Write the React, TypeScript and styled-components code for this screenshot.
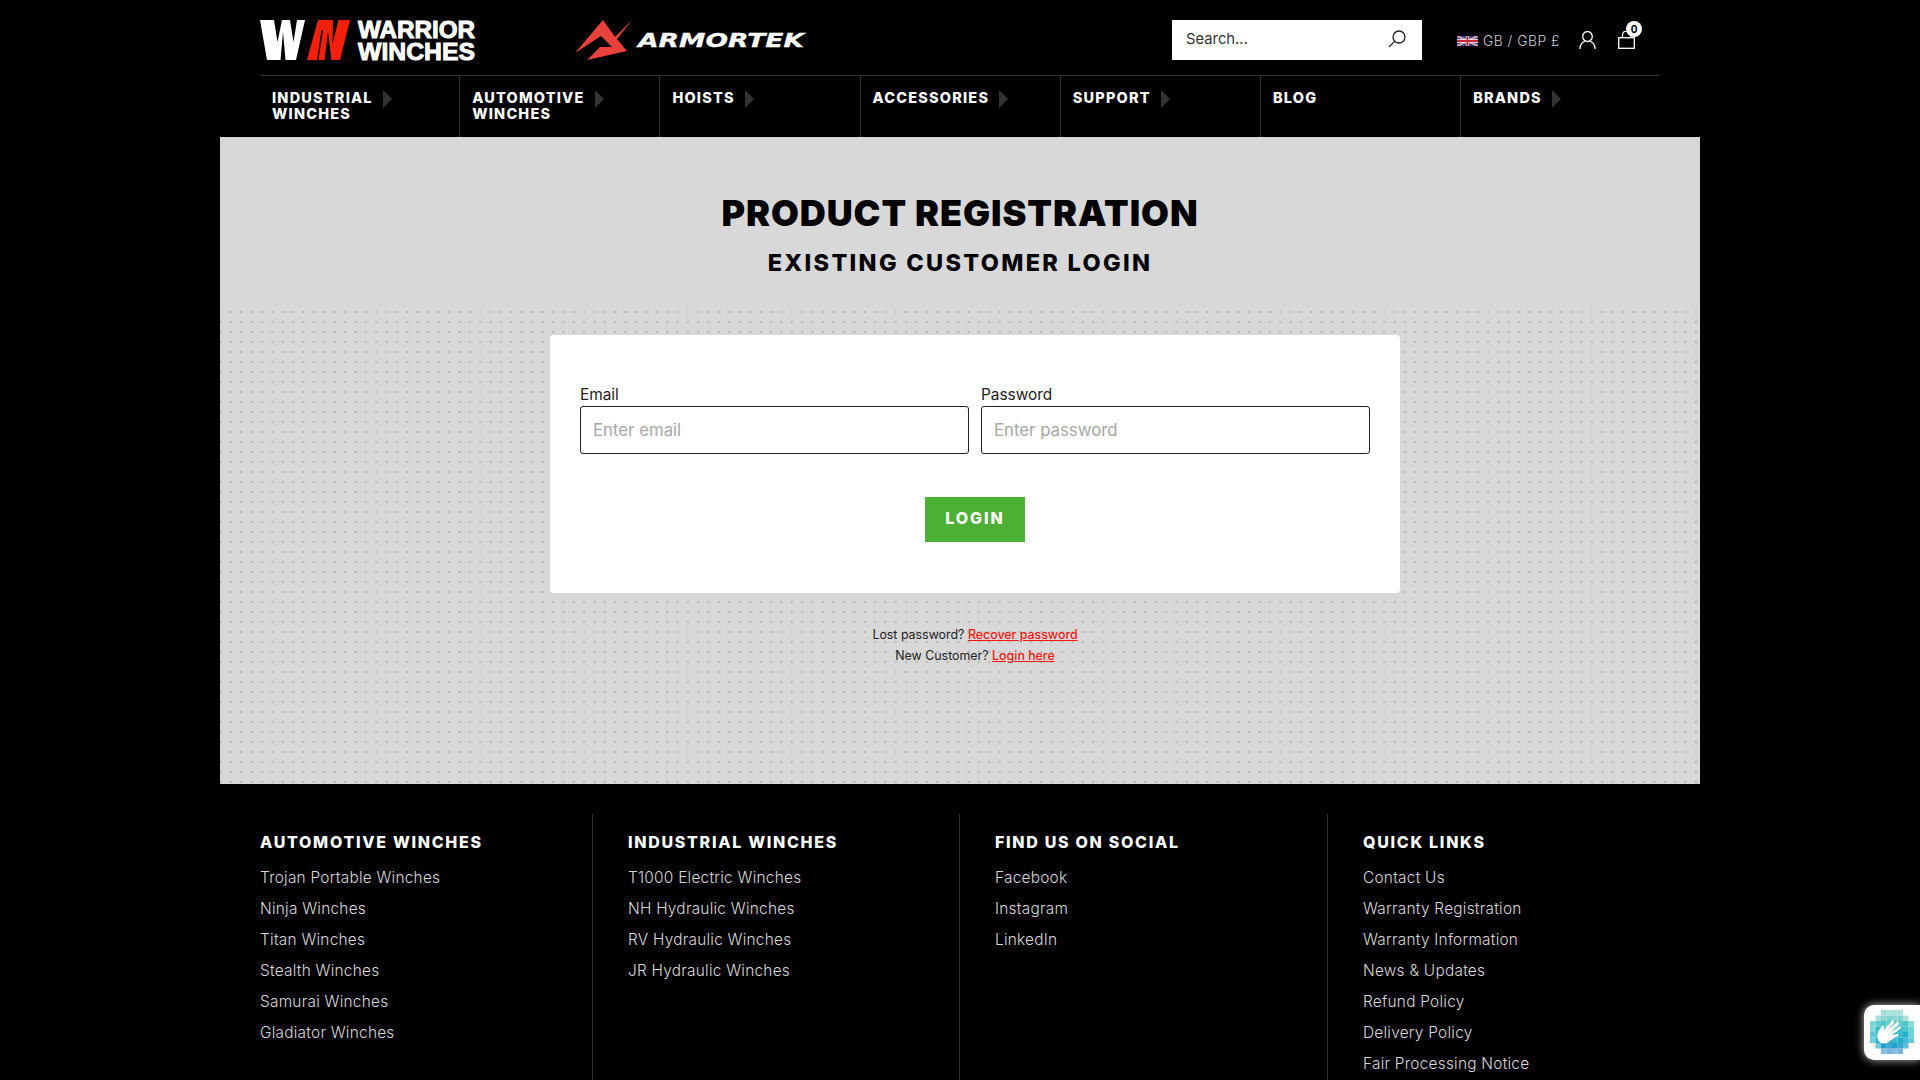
import React from "react";
import styled, { createGlobalStyle } from "styled-components";

const Global = createGlobalStyle`
  html, body { margin: 0; padding: 0; background: #000; }
  body { font-family: Inter, "Liberation Sans", sans-serif; overflow: hidden; }
  * { box-sizing: border-box; }
  input::placeholder { color: #a8a8a8; opacity: 1; }
`;

const wide = `Inter, "DejaVu Sans", sans-serif`;

const Page = styled.div`
  position: relative;
  width: 1920px;
  height: 1080px;
  overflow: hidden;
  background: #000;
`;
const Header = styled.header`
  width: 1400px;
  margin: 0 auto;
`;
const TopBar = styled.div`
  height: 75px;
  display: flex;
  align-items: flex-start;
  padding-top: 20px;
`;
const LogoSvg = styled.svg`
  display: block;
  flex: none;
  overflow: visible;
`;
const SearchBox = styled.div`
  width: 250px;
  height: 40px;
  margin-left: 361px;
  background: #fff;
  display: flex;
  align-items: center;
  justify-content: space-between;
  padding: 0 15px 3px 14px;
  font-size: 14.8px;
  color: #333;
  font-weight: 400;
`;
const Tools = styled.div`
  display: flex;
  align-items: center;
  margin-left: 35px;
  height: 40px;
`;
const Currency = styled.div`
  display: flex;
  align-items: center;
  gap: 5px;
  color: #ccc;
  font-size: 13.8px;
  font-weight: 300;
  letter-spacing: 0.5px;
  margin-top: 2px;
  width: 122px;
`;
const Bag = styled.div`
  position: relative;
  margin-left: 22px;
  width: 17px;
  height: 18px;
`;
const Badge = styled.span`
  position: absolute;
  left: 8px;
  top: -10px;
  width: 16px;
  height: 16px;
  border-radius: 50%;
  background: #fff;
  color: #000;
  font-size: 10px;
  font-weight: 700;
  display: flex;
  align-items: center;
  justify-content: center;
`;
const Nav = styled.nav`
  display: grid;
  grid-template-columns: repeat(7, 200.2px);
  width: 1400px;
  height: 62px;
  border-top: 1px solid #333;
`;
const NavItem = styled.div<{ $last?: boolean }>`
  display: flex;
  align-items: flex-start;
  padding: 14px 12px 0;
  gap: 10px;
  border-right: ${(p) => (p.$last ? "none" : "1px solid #333")};
  color: #fff;
  font: 800 14.5px/16px ${wide};
  letter-spacing: 1.2px;
`;
const NavArrow = styled.span`
  flex: none;
  width: 0;
  height: 0;
  border-left: 9px solid #333;
  border-top: 9px solid transparent;
  border-bottom: 9px solid transparent;
`;
const Main = styled.main`
  width: 1480px;
  height: 647px;
  margin: 0 auto;
  background: #d8d8d8;
  color: #000;
`;
const TitleBlock = styled.div`
  height: 170px;
  padding-top: 55px;
  text-align: center;
`;
const Title = styled.h1`
  margin: 0;
  font: 900 36px/42px ${wide};
  letter-spacing: 0.9px;
`;
const SubTitle = styled.h2`
  margin: 15px 0 0;
  font: 800 23.5px/28px ${wide};
  letter-spacing: 2.3px;
`;
const Dotted = styled.section`
  height: 477px;
  padding: 28px 300px 0 330px;
  background-image: radial-gradient(circle, #b4b4b4 0.9px, transparent 1.3px);
  background-size: 10.4px 10px;
  background-position: 5.6px 0;
`;
const Card = styled.div`
  height: 258px;
  padding: 48px 30px 0;
  background: #fff;
  border-radius: 4px;
`;
const Fields = styled.div`
  display: grid;
  grid-template-columns: 389px 389px;
  gap: 12px;
`;
const Field = styled.label`
  display: block;
  color: #222;
  font-size: 15.4px;
  line-height: 23px;
`;
const Input = styled.input`
  display: block;
  width: 100%;
  height: 48px;
  padding: 0 12px;
  border: 1px solid #222;
  border-radius: 3px;
  outline: none;
  font: 400 16.8px Inter, sans-serif;
  background: #fff;
`;
const LoginButton = styled.button`
  display: block;
  width: 100px;
  height: 45px;
  margin: 43px auto 0;
  padding: 0 0 3px;
  border: none;
  background: #4cb034;
  color: #fff;
  font: 800 16px ${wide};
  letter-spacing: 1.9px;
`;
const Help = styled.div`
  margin-top: 31px;
  text-align: center;
  font-size: 12.4px;
  line-height: 21px;
  color: #222;
`;
const RedLink = styled.a`
  color: #f5160c;
  font-weight: 500;
  text-decoration: underline;
`;
const Footer = styled.footer`
  display: grid;
  grid-template-columns: 368px 367px 368px 368px;
  margin: 30px 0 0 225px;
`;
const FootCol = styled.div<{ $last?: boolean }>`
  height: 400px;
  padding: 18px 0 0 35px;
  border-right: ${(p) => (p.$last ? "none" : "1px solid #333")};
`;
const FootHead = styled.h3`
  margin: 0 0 10px;
  color: #fff;
  font: 800 16px/20px ${wide};
  letter-spacing: 1.7px;
`;
const FootLink = styled.a`
  display: block;
  color: #d8d8d8;
  font-size: 15.4px;
  font-weight: 300;
  line-height: 31px;
  letter-spacing: 0.25px;
`;
const Widget = styled.div`
  position: absolute;
  right: 0;
  top: 1005px;
  width: 56px;
  height: 55px;
  padding: 5px 0 0 6px;
  background: #fff;
  border-radius: 10px 0 0 10px;
  box-shadow: 0 0 8px rgba(255, 255, 255, 0.75);
`;

const logoType = { font: "700 24.5px 'Liberation Sans', sans-serif" };

const WarriorLogo = () => (
  <LogoSvg width={220} height={42} viewBox="0 0 220 42">
    <polygon fill="#fff" points="0,0 14,0 17.5,22 22,0 30,0 33.5,22 37,0 45,0 36,40 25.5,40 23,12 20.5,40 7,40" />
    <polygon fill="#f5200c" points="47,40 58,0 73,0 72.5,24 78.5,0 90,0 80,40 71.5,40 68,12 64.5,40" />
    <polygon fill="#000" points="61.5,10 63,10 58.5,40 57,40" />
    <text x="98" y="18" textLength="117" lengthAdjust="spacingAndGlyphs" fill="#fff" stroke="#fff" strokeWidth="1" style={logoType}>WARRIOR</text>
    <text x="98" y="40" textLength="117" lengthAdjust="spacingAndGlyphs" fill="#fff" stroke="#fff" strokeWidth="1" style={logoType}>WINCHES</text>
  </LogoSvg>
);

const ArmortekLogo = () => (
  <LogoSvg width={236} height={40} viewBox="0 0 236 40" style={{ marginLeft: 95 }}>
    <polygon fill="#e8423a" points="28,0 40,17 57,0 42,19 52,31 12,40 25,27 37,27 26,16 0,33" />
    <text x="63" y="27" textLength="166" lengthAdjust="spacingAndGlyphs" fill="#fff" stroke="#fff" strokeWidth="0.3"
      style={{ font: "italic 700 19px 'DejaVu Sans', sans-serif" }}>ARMORTEK</text>
  </LogoSvg>
);

const SearchIcon = () => (
  <svg width="20" height="20" viewBox="0 0 20 20" fill="none" stroke="#222" strokeWidth="1.3">
    <circle cx="12" cy="8" r="6" />
    <path d="M7.6 12.4 2 18" />
  </svg>
);
const Flag = () => (
  <svg width="21" height="10" viewBox="0 0 21 10">
    <rect width="21" height="10" fill="#2b3f86" />
    <path d="M0 0 21 10M21 0 0 10" stroke="#fff" strokeWidth="2" />
    <path d="M0 0 21 10M21 0 0 10" stroke="#c8283c" strokeWidth="0.8" />
    <path d="M10.5 0v10M0 5h21" stroke="#fff" strokeWidth="3.4" />
    <path d="M10.5 0v10M0 5h21" stroke="#c8283c" strokeWidth="2" />
  </svg>
);
const UserIcon = () => (
  <svg width="17" height="18" viewBox="0 0 17 18" fill="none" stroke="#fff" strokeWidth="1.3">
    <ellipse cx="8.5" cy="5.5" rx="4.8" ry="5" />
    <path d="M.8 18c.4-4.2 2.6-7 5-7.6M16.2 18c-.4-4.2-2.6-7-5-7.6" />
  </svg>
);
const BagIcon = () => (
  <svg width="17" height="18" viewBox="0 0 17 18" fill="none" stroke="#fff" strokeWidth="1.3">
    <rect x="0.7" y="6.7" width="15.6" height="10.6" />
    <path d="M4.5 6.5V4a4 4 0 0 1 8 0v2.5" />
  </svg>
);

const cols = ["#7fd0cc", "#4fc4c4", "#35bcc4", "#22b0c6", "#1f9fcc", "#3f92d2"];
const HelpWidget = () => {
  const cells: React.ReactElement[] = [];
  for (let r = 0; r < 8; r++) {
    for (let c = 0; c < 8; c++) {
      const d = Math.hypot(r - 3.5, c - 3.5);
      if (d > 4.1) continue;
      const rowIdx = Math.min(5, Math.floor(r * 0.75));
      const tint = (r + c) % 2 === 0 ? 1 : 0.88;
      const edge = d > 3.4 ? 0.7 : 1;
      cells.push(
        <rect key={`${r}-${c}`} x={c * 5.5} y={r * 5.5} width="5.5" height="5.5" fill={cols[rowIdx]} opacity={tint * edge} />
      );
    }
  }
  return (
    <svg width="44" height="44" viewBox="0 0 44 44">
      {cells}
      <path fill="#fff" d="M8 30c-1-3-1-6 0-8l4-6c1-1 3 0 2 2l-1 3 9-10c1-1 3 0 2 2l-6 7 9-8c1-1 3 1 2 2l-8 8 8-5c2-1 3 1 1 2l-8 6 5-1c2 0 2 2 0 2.5-3 1-6 4-9 6-4 2-8 1-10-2z" />
    </svg>
  );
};

const navItems = [
  { label: ["INDUSTRIAL", "WINCHES"], arrow: true },
  { label: ["AUTOMOTIVE", "WINCHES"], arrow: true },
  { label: ["HOISTS"], arrow: true },
  { label: ["ACCESSORIES"], arrow: true },
  { label: ["SUPPORT"], arrow: true },
  { label: ["BLOG"], arrow: false },
  { label: ["BRANDS"], arrow: true },
];
const footer = [
  { head: "AUTOMOTIVE WINCHES", links: ["Trojan Portable Winches", "Ninja Winches", "Titan Winches", "Stealth Winches", "Samurai Winches", "Gladiator Winches"] },
  { head: "INDUSTRIAL WINCHES", links: ["T1000 Electric Winches", "NH Hydraulic Winches", "RV Hydraulic Winches", "JR Hydraulic Winches"] },
  { head: "FIND US ON SOCIAL", links: ["Facebook", "Instagram", "LinkedIn"] },
  { head: "QUICK LINKS", links: ["Contact Us", "Warranty Registration", "Warranty Information", "News & Updates", "Refund Policy", "Delivery Policy", "Fair Processing Notice"] },
];

export default function App() {
  return (
    <Page>
      <Global />
      <Header>
        <TopBar>
          <WarriorLogo />
          <ArmortekLogo />
          <SearchBox>
            <span>Search...</span>
            <SearchIcon />
          </SearchBox>
          <Tools>
            <Currency>
              <Flag />
              <span>GB / GBP £</span>
            </Currency>
            <UserIcon />
            <Bag>
              <BagIcon />
              <Badge>0</Badge>
            </Bag>
          </Tools>
        </TopBar>
        <Nav>
          {navItems.map((n, i) => (
            <NavItem key={i} $last={i === navItems.length - 1}>
              <span>
                {n.label.map((l, j) => (
                  <React.Fragment key={l}>
                    {j > 0 && <br />}
                    {l}
                  </React.Fragment>
                ))}
              </span>
              {n.arrow && <NavArrow />}
            </NavItem>
          ))}
        </Nav>
      </Header>
      <Main>
        <TitleBlock>
          <Title>PRODUCT REGISTRATION</Title>
          <SubTitle>EXISTING CUSTOMER LOGIN</SubTitle>
        </TitleBlock>
        <Dotted>
          <Card>
            <Fields>
              <Field>
                Email
                <Input placeholder="Enter email" />
              </Field>
              <Field>
                Password
                <Input placeholder="Enter password" />
              </Field>
            </Fields>
            <LoginButton>LOGIN</LoginButton>
          </Card>
          <Help>
            Lost password? <RedLink>Recover password</RedLink>
            <br />
            New Customer? <RedLink>Login here</RedLink>
          </Help>
        </Dotted>
      </Main>
      <Footer>
        {footer.map((c, i) => (
          <FootCol key={c.head} $last={i === footer.length - 1}>
            <FootHead>{c.head}</FootHead>
            {c.links.map((l) => (
              <FootLink key={l}>{l}</FootLink>
            ))}
          </FootCol>
        ))}
      </Footer>
      <Widget>
        <HelpWidget />
      </Widget>
    </Page>
  );
}
